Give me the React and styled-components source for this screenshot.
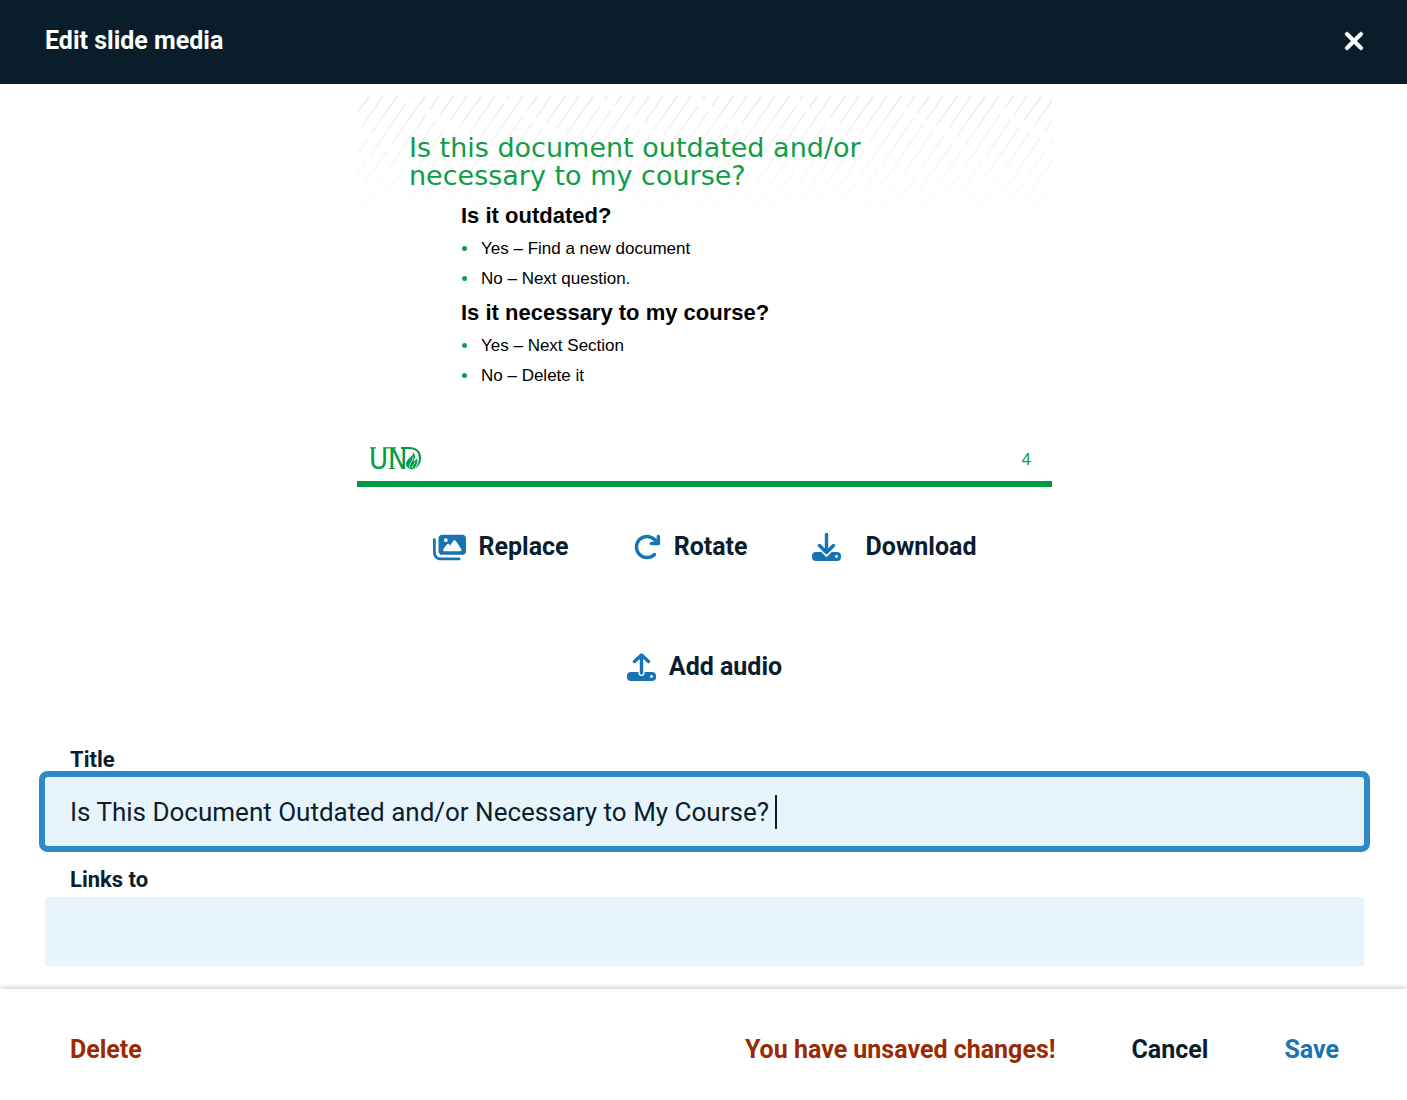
import React, { useState } from "react";
import styled, { createGlobalStyle } from "styled-components";
import { FaImages, FaArrowRotateRight, FaXmark } from "react-icons/fa6";

const GlobalStyle = createGlobalStyle`
    * {
        box-sizing: border-box;
    }

    body {
        margin: 0;
        background: #ffffff;
        color: #0b1e2d;
        font-family: Roboto, "Liberation Sans", sans-serif;
        font-size: 25px;
        line-height: 34px;
    }
`;

const LINE_STEP = 14;

const Hatching = () => {
    const lines = [];
    for (let i = 0; i < 58; i++) {
        const x = 12 + i * LINE_STEP;
        const a = 30 + ((i * 37) % 51);
        const b = 38 + ((i * 23) % 43);
        lines.push(
            <line
                key={i}
                x1={x}
                y1="0"
                x2={x - 86}
                y2="125"
                strokeDasharray={`${a} 7 ${b} 8`}
                strokeDashoffset={(i * 29) % 50}
            />
        );
    }
    return (
        <HatchSvg viewBox="0 0 695 125" preserveAspectRatio="xMinYMin slice" aria-hidden="true">
            <defs>
                <linearGradient id="hatch-fade" x1="0" y1="0" x2="0" y2="125" gradientUnits="userSpaceOnUse">
                    <stop offset="0" stopColor="#ebebeb" />
                    <stop offset="0.4" stopColor="#f4f4f4" />
                    <stop offset="1" stopColor="#fdfdfd" />
                </linearGradient>
            </defs>
            <g stroke="url(#hatch-fade)" strokeWidth="1.5">
                {lines}
            </g>
        </HatchSvg>
    );
};

// the round emblem with the flame closes the wordmark
const UndLogo = () => (
    <svg width="54" height="36" viewBox="0 0 54 36" role="img" aria-label="UND">
        <text x="-1" y="28" fill="#009a44" fontFamily="DejaVu Sans Condensed, DejaVu Sans, sans-serif" fontSize="29">
            UN
        </text>
        <path
            d="M0 6.8H6M13 6.8H26M19 27.5H25"
            fill="none"
            stroke="#009a44"
            strokeWidth="1.2"
        />
        <path
            d="M31 7H39C46 7 50 11 50 17C50 22 47 26 42 28"
            fill="none"
            stroke="#009a44"
            strokeWidth="2.2"
        />
        <path
            d="M42 29C34 27 34 21 39 17C42 15 43 13 43 10C46 14 46 17 44 20C46 19 47 17 47 15C49 19 48 26 42 29Z"
            fill="#009a44"
            stroke="#fff"
            strokeWidth="1"
        />
        <path d="M40 27C38 23 43 21 43 16M42 27C42 24 45 23 45 21" fill="none" stroke="#fff" strokeWidth="0.7" />
    </svg>
);

const Drive = () => (
    <>
        <rect x="0" y="19" width="29" height="9" rx="4" fill="currentColor" />
        <circle cx="24.5" cy="23.5" r="1.4" fill="#fff" />
    </>
);

const DownloadIcon = () => (
    <svg width="29" height="29" viewBox="0 0 29 29" aria-hidden="true">
        <Drive />
        <path d="M7 12.5L14.5 20L22 12.5" fill="none" stroke="#fff" strokeWidth="6" />
        <path
            d="M14.5 1.5V19M7.5 12.5L14.5 19.5L21.5 12.5"
            fill="none"
            stroke="currentColor"
            strokeWidth="3.4"
            strokeLinecap="round"
            strokeLinejoin="round"
        />
    </svg>
);

const UploadIcon = () => (
    <svg width="29" height="29" viewBox="0 0 29 29" aria-hidden="true">
        <Drive />
        <path d="M14.5 10V20" fill="none" stroke="#fff" strokeWidth="6" strokeLinecap="round" />
        <path
            d="M14.5 20V2M7.5 8.5L14.5 2L21.5 8.5"
            fill="none"
            stroke="currentColor"
            strokeWidth="3.4"
            strokeLinecap="round"
            strokeLinejoin="round"
        />
    </svg>
);

const SlidePreview = () => (
    <Slide>
        <Hatching />
        <SlideTitle>
            Is this document outdated and/or
            <br />
            necessary to my course?
        </SlideTitle>
        <SlideBody>
            <h3>Is it outdated?</h3>
            <ul>
                <li>Yes – Find a new document</li>
                <li>No – Next question.</li>
            </ul>
            <h3>Is it necessary to my course?</h3>
            <ul>
                <li>Yes – Next Section</li>
                <li>No – Delete it</li>
            </ul>
        </SlideBody>
        <SlideFooter>
            <UndLogo />
            <span>4</span>
        </SlideFooter>
    </Slide>
);

const App = () => {
    const [title, setTitle] = useState("Is This Document Outdated and/or Necessary to My Course? ");
    const [link, setLink] = useState("");

    return (
        <Page>
            <GlobalStyle />
            <Header>
                <h1>Edit slide media</h1>
                <CloseButton type="button" aria-label="Close">
                    <FaXmark size={28} stroke="currentColor" strokeWidth={16} />
                </CloseButton>
            </Header>

            <Main>
                <SlidePreview />
                <Actions>
                    <ActionButton type="button">
                        <FaImages size={33} />
                        Replace
                    </ActionButton>
                    <ActionButton type="button">
                        <FaArrowRotateRight size={28} />
                        Rotate
                    </ActionButton>
                    <ActionButton type="button" $gap="25px">
                        <DownloadIcon />
                        Download
                    </ActionButton>
                </Actions>
                <Actions $audio>
                    <ActionButton type="button">
                        <UploadIcon />
                        Add audio
                    </ActionButton>
                </Actions>

                <Fields>
                    <Field>
                        <label htmlFor="title">Title</label>
                        <InputBox $active>
                            <input id="title" type="text" value={title} onChange={(e) => setTitle(e.target.value)} />
                            <Caret />
                        </InputBox>
                    </Field>
                    <Field>
                        <label htmlFor="links">Links to</label>
                        <InputBox>
                            <input id="links" type="text" value={link} onChange={(e) => setLink(e.target.value)} />
                        </InputBox>
                    </Field>
                </Fields>
            </Main>

            <Footer>
                <TextButton type="button" $color="#9c2a00">Delete</TextButton>
                <FooterRight>
                    <Warning role="status">You have unsaved changes!</Warning>
                    <TextButton type="button" $color="#0b1e2d">Cancel</TextButton>
                    <TextButton type="button" $color="#1873b4">Save</TextButton>
                </FooterRight>
            </Footer>
        </Page>
    );
};

const Page = styled.div`
    min-height: 100vh;
    display: flex;
    flex-direction: column;
`;

const Header = styled.header`
    display: flex;
    align-items: center;
    justify-content: space-between;
    height: 84px;
    padding: 0 39px 3px 45px;
    background: #091d2b;
    color: #ffffff;

    h1 {
        margin: 0;
        font-size: 25px;
        font-weight: 700;
    }
`;

const CloseButton = styled.button`
    display: flex;
    padding: 0;
    border: 0;
    background: none;
    color: inherit;
    cursor: pointer;
`;

const Main = styled.main`
    flex: 1;
    display: flex;
    flex-direction: column;
    padding: 12px 43px 23px 45px;
`;

const Slide = styled.section`
    position: relative;
    display: flex;
    flex-direction: column;
    align-self: center;
    width: 100%;
    max-width: 695px;
    min-height: 391px;
    padding-top: 38px;
    border-bottom: 6px solid #009a44;
    color: #000000;
    font-family: "Liberation Sans", Arial, sans-serif;
`;

const HatchSvg = styled.svg`
    position: absolute;
    top: 0;
    left: 0;
    width: 100%;
    height: 125px;
`;

const SlideTitle = styled.h2`
    position: relative;
    margin: 0 0 0 52px;
    color: #0f9d48;
    font-family: "DejaVu Sans", sans-serif;
    font-size: 27px;
    font-weight: 400;
    line-height: 28px;
`;

const SlideBody = styled.div`
    position: relative;
    flex: 1;
    margin: 12px 0 0 104px;

    h3 {
        margin: 0;
        font-size: 22px;
        font-weight: 700;
        line-height: 28px;
    }

    ul {
        margin: 4px 0 5px;
        padding: 0;
        list-style: none;
    }

    li {
        display: flex;
        align-items: center;
        font-size: 17px;
        line-height: 30px;
    }

    li::before {
        content: "";
        width: 5px;
        height: 5px;
        margin: 0 14px 2px 1px;
        border-radius: 50%;
        background: #0f9d48;
    }
`;

const SlideFooter = styled.div`
    display: flex;
    align-items: flex-end;
    justify-content: space-between;
    padding: 0 21px 4px 13px;
    color: #0f9d48;
    font-size: 17px;
`;

const Actions = styled.div`
    display: flex;
    justify-content: center;
    gap: 64px;
    margin-top: ${(props) => (props.$audio ? "60px" : "30px")};
`;

const ActionButton = styled.button`
    display: flex;
    align-items: center;
    gap: ${(props) => props.$gap || "13px"};
    height: 60px;
    padding: 0;
    border: 0;
    background: none;
    color: #0b1e2d;
    font: inherit;
    font-weight: 700;
    cursor: pointer;

    svg {
        color: #1873b4;
    }
`;

const Fields = styled.div`
    display: flex;
    flex-direction: column;
    gap: 21px;
    margin-top: 50px;
`;

const Field = styled.div`
    label {
        display: block;
        margin: 0 0 4px 25px;
        font-size: 22px;
        font-weight: 700;
        line-height: 26px;
    }
`;

const InputBox = styled.div`
    display: flex;
    align-items: center;
    height: 69px;
    padding: 0 25px;
    border-radius: 3px;
    background: #e8f4fb;
    box-shadow: ${(props) => (props.$active ? "0 0 0 6px #2d89c8" : "none")};

    input {
        field-sizing: content;
        min-width: 20px;
        max-width: 100%;
        padding: 0;
        border: 0;
        outline: 0;
        background: none;
        color: inherit;
        font: inherit;
        font-size: 26px;
    }
`;

const Caret = styled.span`
    flex: none;
    width: 2px;
    height: 34px;
    background: #0b1e2d;
`;

const Footer = styled.footer`
    display: flex;
    justify-content: space-between;
    padding: 44px 68px 33px 70px;
    background: #ffffff;
    box-shadow: 0 0 6px rgba(0, 0, 0, 0.3);
`;

const FooterRight = styled.div`
    display: flex;
    gap: 76px;
`;

const Warning = styled.span`
    color: #9c2a00;
    font-weight: 700;
`;

const TextButton = styled.button`
    padding: 0;
    border: 0;
    background: none;
    color: ${(props) => props.$color};
    font: inherit;
    font-weight: 700;
    cursor: pointer;
`;

export default App;
